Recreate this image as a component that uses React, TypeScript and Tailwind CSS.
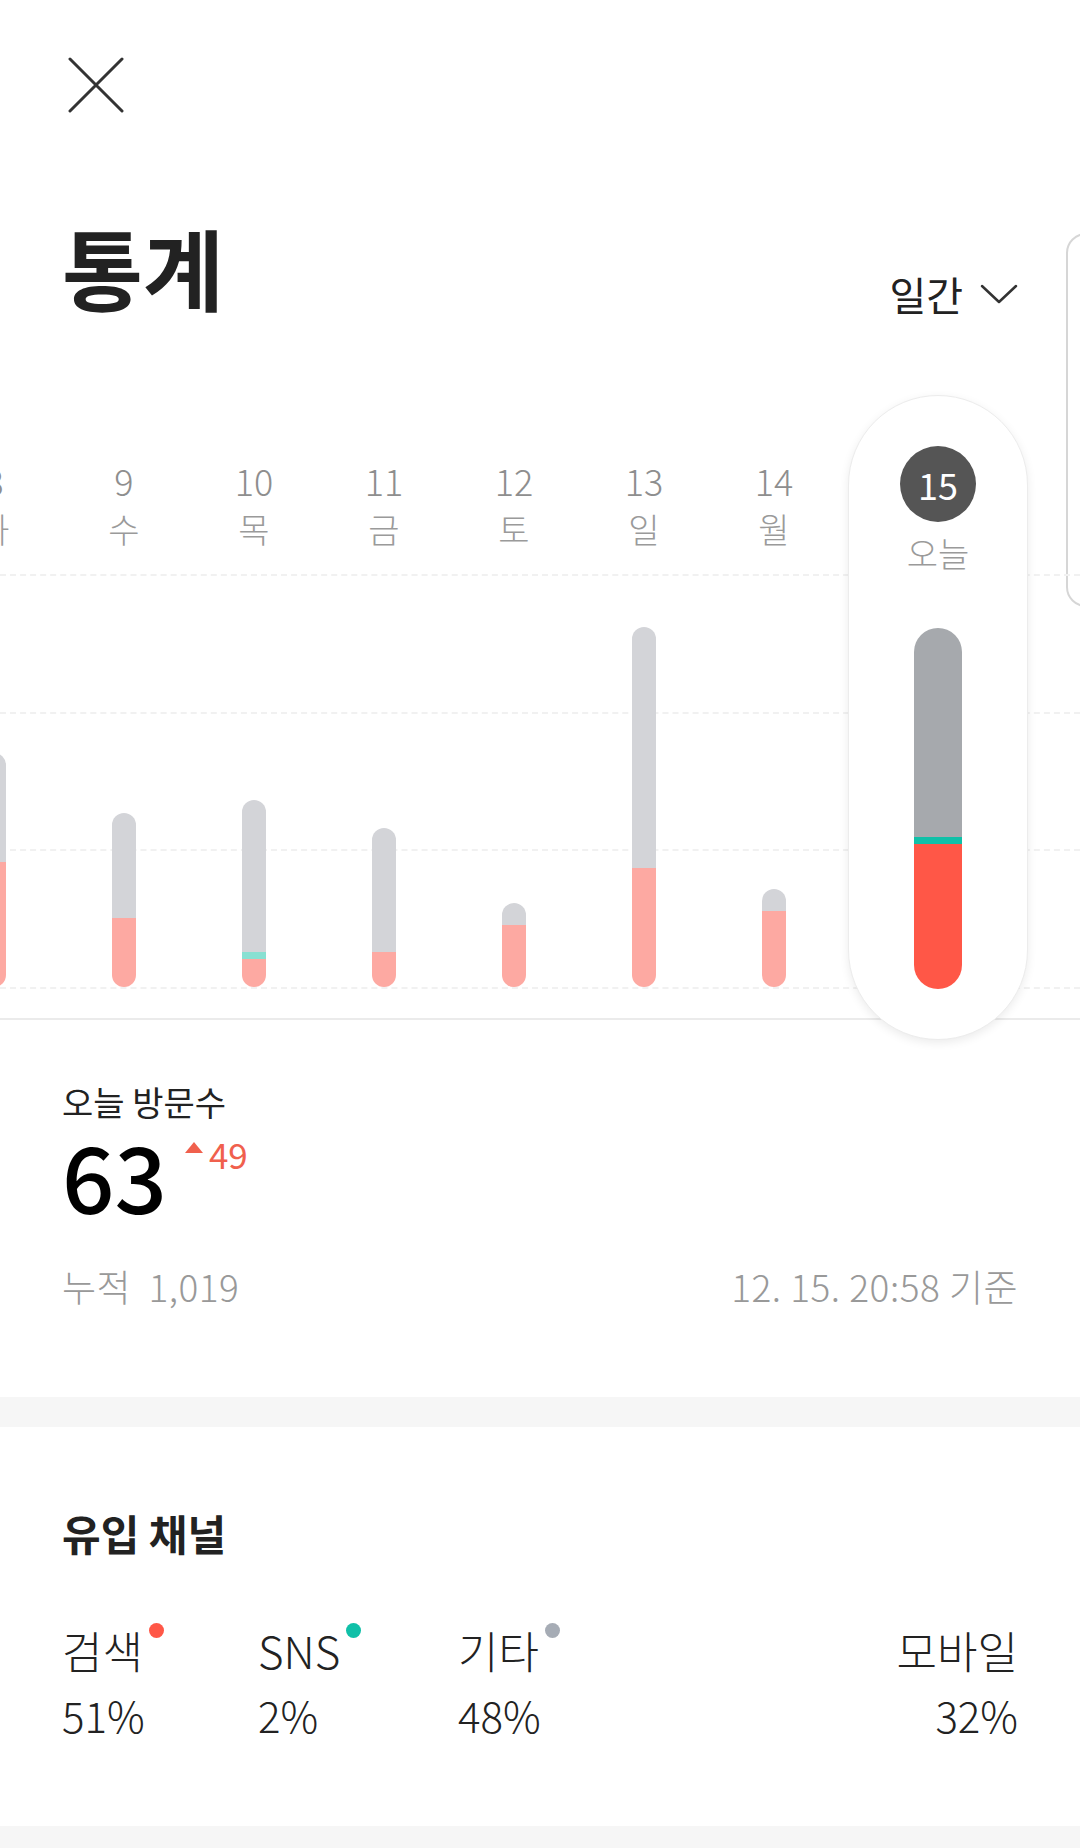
import React from "react";

const FONT = { fontFamily: '"Noto Sans CJK KR", "Noto Sans", sans-serif' };

type Day = { n: string; w: string; total: number; accent: number; base: number };

const DAYS: Day[] = [
  { n: "8", w: "화", total: 234, accent: 0, base: 125 },
  { n: "9", w: "수", total: 174, accent: 0, base: 69 },
  { n: "10", w: "목", total: 187, accent: 7, base: 28 },
  { n: "11", w: "금", total: 159, accent: 0, base: 35 },
  { n: "12", w: "토", total: 84, accent: 0, base: 62 },
  { n: "13", w: "일", total: 360, accent: 0, base: 119 },
  { n: "14", w: "월", total: 98, accent: 0, base: 76 },
];

const TODAY = { n: "15", w: "오늘", total: 361, accent: 7, base: 145 };

const CHANNELS = [
  { label: "검색", pct: "51%", dot: "bg-[#ff5747]" },
  { label: "SNS", pct: "2%", dot: "bg-[#10c0a8]" },
  { label: "기타", pct: "48%", dot: "bg-[#a6acb5]" },
];

function Bar({ d, today }: { d: Day; today?: boolean }) {
  return (
    <div
      className={`flex flex-col overflow-hidden rounded-full ${today ? "w-[48px]" : "w-[24px]"}`}
      style={{ height: d.total }}
    >
      <div className={`flex-1 ${today ? "bg-[#a6a9ad]" : "bg-[#d3d4d8]"}`} />
      {d.accent > 0 && (
        <div className={today ? "bg-[#10c0a8]" : "bg-[#88e0d2]"} style={{ height: d.accent }} />
      )}
      <div className={today ? "bg-[#ff5747]" : "bg-[#fda9a2]"} style={{ height: d.base }} />
    </div>
  );
}

export default function App() {
  return (
    <div className="relative h-[1848px] w-[1080px] overflow-hidden bg-white text-[#222]" style={FONT}>
      {/* next card peeking from the right */}
      <div className="absolute left-[1066px] top-[233px] h-[374px] w-[60px] rounded-[20px] border-2 border-[#d6d6d6]" />

      <div className="h-[140px] pl-[68px] pt-[57px]">
        <svg width="56" height="56" viewBox="0 0 56 56" fill="none" stroke="#333" strokeWidth="3" strokeLinecap="round">
          <path d="M2 2 L54 54 M54 2 L2 54" />
        </svg>
      </div>

      <div className="mt-[82px] flex h-[88px] items-start justify-between px-[62px]">
        <h1 className="text-[88px] font-bold leading-[88px]">통계</h1>
        <div className="mt-[52px] flex items-center gap-[17px]">
          <span className="text-[40px] leading-[40px]">일간</span>
          <svg width="38" height="20" viewBox="0 0 38 20" fill="none" stroke="#333" strokeWidth="2.5" strokeLinecap="round" strokeLinejoin="round">
            <path d="M2 2 L19 18 L36 2" />
          </svg>
        </div>
      </div>

      {/* chart */}
      <div className="relative mt-[85px] h-[645px]">
        <div className="absolute left-0 right-0 top-[179px] border-t-2 border-dashed border-[#f1f1f1]" />
        <div className="absolute left-0 right-0 top-[317px] border-t-2 border-dashed border-[#f1f1f1]" />
        <div className="absolute left-0 right-0 top-[454px] border-t-2 border-dashed border-[#f1f1f1]" />
        <div className="absolute left-0 right-0 top-[592px] border-t-2 border-dashed border-[#f1f1f1]" />
        <div className="absolute left-0 right-0 top-[623px] h-[2px] bg-[#ebebeb]" />

        <div className="relative -ml-[71px] flex">
          {DAYS.map((d) => (
            <div key={d.n} className="flex w-[130px] flex-col items-center pt-[67px]">
              <div className="text-[36px] font-light leading-[36px] text-[#8e8e8e]">{d.n}</div>
              <div className="mt-[14px] text-[34px] font-light leading-[34px] text-[#9a9a9a]">{d.w}</div>
              <div className="mt-[28px] flex h-[413px] flex-col items-center justify-end">
                <Bar d={d} />
              </div>
            </div>
          ))}

          <div className="ml-[9px] flex h-[645px] w-[180px] flex-col items-center rounded-full border border-[#ececec] bg-white shadow-[0_3px_10px_rgba(0,0,0,0.08)]">
            <div className="mt-[50px] flex h-[76px] w-[76px] items-center justify-center rounded-full bg-[#555555] text-[36px] leading-none text-white">
              {TODAY.n}
            </div>
            <div className="mt-[14px] text-[34px] font-light leading-[34px] text-[#9a9a9a]">{TODAY.w}</div>
            <div className="mt-[4px] flex h-[415px] flex-col items-center justify-end">
              <Bar d={TODAY} today />
            </div>
          </div>
        </div>
      </div>

      {/* today visits */}
      <div className="px-[62px]">
        <div className="mt-[45px] text-[34px] leading-[34px]">오늘 방문수</div>
        <div className="mt-[9px] flex items-start">
          <span className="text-[92px] font-medium leading-[92px] text-black">63</span>
          <span className="ml-[18px] mt-[14px] flex items-center">
            <svg width="18" height="11" viewBox="0 0 18 11" fill="#f0604d">
              <path d="M9 0 L18 11 L0 11 Z" />
            </svg>
          </span>
          <span className="ml-[6px] mt-[8px] text-[35px] leading-[35px] text-[#f0604d]">49</span>
        </div>
        <div className="mt-[48px] flex justify-between text-[37px] font-light leading-[37px] tracking-[0.5px] text-[#999]">
          <span>누적&nbsp; 1,019</span>
          <span>12. 15. 20:58 기준</span>
        </div>
      </div>

      <div className="mt-[92px] h-[30px] bg-[#f6f6f6]" />

      {/* channels */}
      <div className="px-[62px]">
        <h2 className="mt-[85px] text-[42px] font-bold leading-[42px]">유입 채널</h2>
        <div className="mt-[74px] grid grid-cols-[196px_200px_1fr_auto]">
          {CHANNELS.map((c) => (
            <div key={c.label} className="flex flex-col">
              <div className="relative self-start text-[44px] font-light leading-[44px]">
                {c.label}
                <span className={`absolute -right-[21px] top-[-5px] h-[15px] w-[15px] rounded-full ${c.dot}`} />
              </div>
              <div className="mt-[22px] text-[42px] font-light leading-[42px]">{c.pct}</div>
            </div>
          ))}
          <div className="flex flex-col items-end">
            <div className="text-[44px] font-light leading-[44px]">모바일</div>
            <div className="mt-[22px] text-[42px] font-light leading-[42px]">32%</div>
          </div>
        </div>
      </div>

      <div className="absolute bottom-0 left-0 right-0 h-[22px] bg-[#f6f6f6]" />
    </div>
  );
}
